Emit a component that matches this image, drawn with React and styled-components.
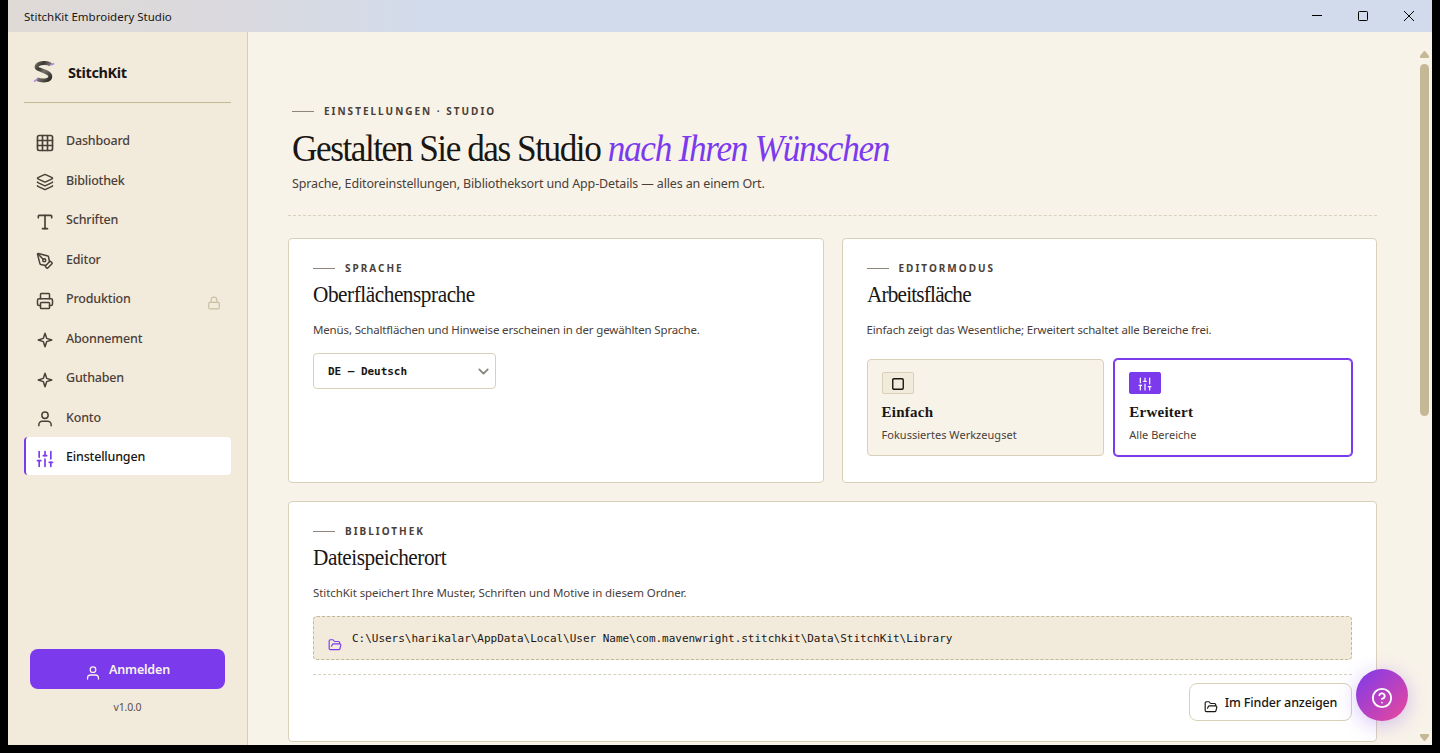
import React from "react";
import styled, { createGlobalStyle } from "styled-components";
import {
  Grid3x3,
  Layers,
  Type,
  PenTool,
  Printer,
  SlidersVertical,
  Lock,
  FolderOpen,
  ChevronDown,
  Square,
  CircleQuestionMark,
} from "lucide-react";

const UserIcon = ({ size = 19, strokeWidth = 1.8 }) => (
  <svg
    width={size}
    height={size}
    viewBox="0 0 24 24"
    fill="none"
    stroke="currentColor"
    strokeWidth={strokeWidth}
    strokeLinecap="round"
  >
    <circle cx="12" cy="7" r="4.2" />
    <path d="M3.8 21v-1.5a4.5 4.5 0 0 1 4.5-4.5h7.4a4.5 4.5 0 0 1 4.5 4.5V21" />
  </svg>
);

const StarIcon = ({ size = 19, strokeWidth = 1.8 }) => (
  <svg
    width={size}
    height={size}
    viewBox="0 0 24 24"
    fill="none"
    stroke="currentColor"
    strokeWidth={strokeWidth}
    strokeLinejoin="round"
  >
    <path d="M12 3l2.2 6.8L21 12l-6.8 2.2L12 21l-2.2-6.8L3 12l6.8-2.2z" />
  </svg>
);

const Logo = () => (
  <svg width="22" height="24" viewBox="0 0 22 24" fill="none">
    <defs>
      <linearGradient id="thread" x1="0" y1="0" x2="1" y2="1">
        <stop offset="0" stopColor="#6b675e" />
        <stop offset="0.25" stopColor="#3b3832" />
        <stop offset="0.5" stopColor="#77736a" />
        <stop offset="1" stopColor="#2b2824" />
      </linearGradient>
    </defs>
    <path
      d="M17.6 5C15.5 2.2 4.8 2 3.6 6.6C2.8 10.5 17.6 10.8 17.3 16.6C17 21.2 9 21.2 4 19.2"
      stroke="url(#thread)"
      strokeWidth="3.9"
    />
    <path d="M17.6 5L21.2 3.4M1 21.6L4.2 19" stroke="#a988ee" strokeWidth="1.6" />
  </svg>
);

const navItems = [
  { label: "Dashboard", icon: Grid3x3, size: 20 },
  { label: "Bibliothek", icon: Layers, size: 18 },
  { label: "Schriften", icon: Type, size: 20 },
  { label: "Editor", icon: PenTool, size: 18 },
  { label: "Produktion", icon: Printer, size: 18 },
  { label: "Abonnement", icon: StarIcon, size: 18 },
  { label: "Guthaben", icon: StarIcon, size: 18 },
  { label: "Konto", icon: UserIcon, size: 18 },
  { label: "Einstellungen", icon: SlidersVertical, size: 20 },
];

const locked = "Produktion";
const current = "Einstellungen";

const App = () => {
  return (
    <>
      <GlobalStyle />
      <Window>
        <TitleBar>
          <span>StitchKit Embroidery Studio</span>
          <WindowControls>
            <WindowButton aria-label="Minimieren">
              <svg width="10" height="10" viewBox="0 0 10 10">
                <path d="M0 4.5h10" stroke="#000" />
              </svg>
            </WindowButton>
            <WindowButton aria-label="Maximieren">
              <svg width="10" height="10" viewBox="0 0 10 10">
                <rect x="0.5" y="0.5" width="9" height="9" rx="0.8" fill="none" stroke="#000" />
              </svg>
            </WindowButton>
            <WindowButton aria-label="Schließen">
              <svg width="10" height="10" viewBox="0 0 10 10">
                <path d="M0 0l10 10M10 0L0 10" stroke="#000" />
              </svg>
            </WindowButton>
          </WindowControls>
        </TitleBar>

        <Body>
          <Sidebar>
            <Brand>
              <Logo />
              <span>StitchKit</span>
            </Brand>
            <Nav>
              {navItems.map(({ label, icon: Icon, size }) => (
                <NavItem key={label} $active={label === current}>
                  <NavIcon>
                    <Icon size={size} strokeWidth={2} />
                  </NavIcon>
                  <NavLabel>{label}</NavLabel>
                  {label === locked && (
                    <LockMark>
                      <Lock size={14} strokeWidth={2} />
                    </LockMark>
                  )}
                </NavItem>
              ))}
            </Nav>
            <SidebarFooter>
              <LoginButton>
                <UserIcon size={16} strokeWidth={1.9} />
                <span>Anmelden</span>
              </LoginButton>
              <Version>v1.0.0</Version>
            </SidebarFooter>
          </Sidebar>

          <Main>
            <PageHeader>
              <Eyebrow>Einstellungen · Studio</Eyebrow>
              <PageTitle>
                Gestalten Sie das Studio <em>nach Ihren Wünschen</em>
              </PageTitle>
              <Lead>
                Sprache, Editoreinstellungen, Bibliotheksort und App-Details — alles an einem Ort.
              </Lead>
            </PageHeader>

            <Cards>
              <Card>
                <Eyebrow>Sprache</Eyebrow>
                <CardTitle>Oberflächensprache</CardTitle>
                <CardText>
                  Menüs, Schaltflächen und Hinweise erscheinen in der gewählten Sprache.
                </CardText>
                <Select>
                  DE — Deutsch
                  <ChevronDown size={17} strokeWidth={2.4} />
                </Select>
              </Card>

              <Card>
                <Eyebrow>Editormodus</Eyebrow>
                <CardTitle $track="-0.9px">Arbeitsfläche</CardTitle>
                <CardText>
                  Einfach zeigt das Wesentliche; Erweitert schaltet alle Bereiche frei.
                </CardText>
                <Modes>
                  <Mode>
                    <ModeChip>
                      <Square size={14} strokeWidth={2.4} />
                    </ModeChip>
                    <ModeName>Einfach</ModeName>
                    <ModeHint>Fokussiertes Werkzeugset</ModeHint>
                  </Mode>
                  <Mode $active>
                    <ModeChip $active>
                      <SlidersVertical size={16} strokeWidth={1.8} />
                    </ModeChip>
                    <ModeName>Erweitert</ModeName>
                    <ModeHint>Alle Bereiche</ModeHint>
                  </Mode>
                </Modes>
              </Card>

              <Card $wide>
                <Eyebrow>Bibliothek</Eyebrow>
                <CardTitle>Dateispeicherort</CardTitle>
                <CardText $track="-0.08px">
                  StitchKit speichert Ihre Muster, Schriften und Motive in diesem Ordner.
                </CardText>
                <PathBox>
                  <FolderOpen size={14} strokeWidth={2} />
                  <code>
                    C:\Users\harikalar\AppData\Local\User Name\com.mavenwright.stitchkit\Data\StitchKit\Library
                  </code>
                </PathBox>
                <CardActions>
                  <FinderButton>
                    <FolderOpen size={14} strokeWidth={2} />
                    <span>Im Finder anzeigen</span>
                  </FinderButton>
                </CardActions>
              </Card>
            </Cards>
          </Main>

          <Scrollbar>
            <ScrollArrow viewBox="0 0 9 7">
              <path d="M4.5 0Q5.2 0 5.7 0.8L9 5V6Q9 7 8 7H1Q0 7 0 6V5L3.3 0.8Q3.8 0 4.5 0Z" />
            </ScrollArrow>
            <Thumb />
            <ScrollArrow viewBox="0 0 9 7" $end>
              <path d="M4.5 7Q5.2 7 5.7 6.2L9 2V1Q9 0 8 0H1Q0 0 0 1V2L3.3 6.2Q3.8 7 4.5 7Z" />
            </ScrollArrow>
          </Scrollbar>
        </Body>

        <HelpButton aria-label="Hilfe">
          <CircleQuestionMark size={22} strokeWidth={2} />
        </HelpButton>
      </Window>
    </>
  );
};

const GlobalStyle = createGlobalStyle`
  *{
    box-sizing: border-box;
    margin: 0;
    padding: 0;
  }
  body{
    background: #000;
    overflow: hidden;
    font-family: "Noto Sans", sans-serif;
    color: #1a1613;
  }
  button{
    font: inherit;
    color: inherit;
    border: none;
    background: none;
  }
  svg{
    flex-shrink: 0;
  }
`;

const Window = styled.div`
  position: relative;
  display: flex;
  flex-direction: column;
  width: 1424px;
  height: 745px;
  margin: 0 8px;
  overflow: hidden;
`;

const TitleBar = styled.header`
  display: flex;
  align-items: center;
  justify-content: space-between;
  height: 32px;
  padding-left: 16px;
  font-size: 11.5px;
  line-height: 16px;
  background: linear-gradient(90deg, #dfdad6 0, #dbd9dd 200px, #d2dbeb 420px);
  span{
    margin-top: 1px;
  }
`;

const WindowControls = styled.div`
  display: flex;
`;

const WindowButton = styled.button`
  display: flex;
  align-items: center;
  justify-content: center;
  width: 46px;
  height: 32px;
`;

const Body = styled.div`
  display: flex;
  flex: 1;
  min-height: 0;
  background: #f8f3e9;
`;

const Sidebar = styled.aside`
  display: flex;
  flex-direction: column;
  width: 240px;
  padding: 0 16px;
  background: #f2eadb;
  border-right: 1px solid #d9ccb8;
`;

const Brand = styled.div`
  display: flex;
  align-items: center;
  gap: 13px;
  height: 71px;
  padding: 28px 0 18px 9px;
  border-bottom: 1px solid #c4b896;
  span{
    font-size: 14.5px;
    font-weight: 700;
    letter-spacing: -0.38px;
    line-height: 20px;
  }
`;

const Nav = styled.nav`
  display: flex;
  flex-direction: column;
  gap: 1.5px;
  margin-top: 18px;
`;

const NavItem = styled.a`
  display: flex;
  align-items: center;
  gap: 11px;
  height: 38px;
  padding: 0 9px;
  border-left: 2px solid ${(p) => (p.$active ? "#7c3aed" : "transparent")};
  border-radius: 4px;
  background: ${(p) => (p.$active ? "#fff" : "transparent")};
  color: ${(p) => (p.$active ? "#1a1613" : "#4a4038")};
  svg{
    color: ${(p) => (p.$active ? "#7c3aed" : "inherit")};
  }
`;

const NavIcon = styled.span`
  display: flex;
  align-items: center;
  justify-content: center;
  width: 20px;
  height: 20px;
  margin-top: 5px;
`;

const NavLabel = styled.span`
  margin-top: 2px;
  font-size: 12.5px;
  font-weight: 500;
  letter-spacing: -0.18px;
  line-height: 18px;
`;

const LockMark = styled.span`
  display: flex;
  margin: 10px 1px 0 auto;
  color: #cbbfa3;
`;

const SidebarFooter = styled.div`
  display: flex;
  flex-direction: column;
  margin: auto 6px 30px;
`;

const LoginButton = styled.button`
  display: flex;
  align-items: center;
  justify-content: center;
  gap: 8px;
  height: 40px;
  border-radius: 8px;
  background: #7c3aed;
  color: #f8f3e9;
  font-size: 12.5px;
  font-weight: 600;
  letter-spacing: -0.18px;
  svg{
    margin-top: 7px;
  }
`;

const Version = styled.div`
  margin-top: 10px;
  text-align: center;
  font-size: 10.5px;
  line-height: 16px;
  letter-spacing: -0.2px;
  color: #5a5048;
`;

const Main = styled.main`
  flex: 1;
  padding: 72px 39px 0 40px;
  overflow: hidden;
`;

const PageHeader = styled.section`
  height: 112px;
  padding-left: 4px;
  border-bottom: 1px dashed #d9d0bd;
`;

const Eyebrow = styled.div`
  display: flex;
  align-items: center;
  gap: 10px;
  font-size: 10px;
  font-weight: 700;
  line-height: 14px;
  letter-spacing: 2px;
  text-transform: uppercase;
  color: #4a4038;
  &::before{
    content: "";
    width: 22px;
    height: 1px;
    background: #8f867b;
  }
`;

const PageTitle = styled.h1`
  width: max-content;
  margin-top: 8px;
  font-family: "Liberation Serif", serif;
  font-size: 38.5px;
  font-weight: 400;
  line-height: 44px;
  letter-spacing: -1.6px;
  transform: scaleX(0.915);
  transform-origin: left;
  em{
    color: #7c3aed;
    letter-spacing: -1.4px;
  }
`;

const Lead = styled.p`
  margin-top: 4px;
  font-size: 12.5px;
  line-height: 20px;
  letter-spacing: -0.14px;
  color: #4a4038;
`;

const Cards = styled.div`
  display: grid;
  grid-template-columns: 1fr 1fr;
  grid-template-rows: 245px 241px;
  gap: 18px;
  margin-top: 22px;
`;

const Card = styled.section`
  grid-column: ${(p) => (p.$wide ? "1 / -1" : "auto")};
  padding: 22px 24px 0;
  border: 1px solid #d9d0b9;
  border-radius: 4px;
  background: #fff;
`;

const CardTitle = styled.h2`
  width: max-content;
  margin-top: 6px;
  font-family: "Liberation Serif", serif;
  font-size: 23px;
  font-weight: 400;
  line-height: 28px;
  letter-spacing: ${(p) => p.$track || "-0.5px"};
  transform: scaleX(0.925);
  transform-origin: left;
`;

const CardText = styled.p`
  margin-top: 12px;
  font-size: 11.5px;
  line-height: 18px;
  letter-spacing: ${(p) => p.$track || "-0.15px"};
  color: #4a4038;
`;

const Select = styled.button`
  display: flex;
  align-items: center;
  justify-content: space-between;
  width: 183px;
  height: 36px;
  margin-top: 14px;
  padding: 0 3px 0 14px;
  border: 1px solid #d9d0b9;
  border-radius: 4px;
  font-family: "DejaVu Sans Mono", monospace;
  font-size: 11px;
  font-weight: 700;
  letter-spacing: -0.04px;
  svg{
    color: #85817c;
  }
`;

const Modes = styled.div`
  display: grid;
  grid-template-columns: 1fr 1fr;
  gap: 10px;
  margin-top: 20px;
`;

const Mode = styled.div`
  height: 97px;
  padding: 12px 14px 0;
  border: 1px solid ${(p) => (p.$active ? "#7c3aed" : "#d9d0b9")};
  border-radius: 4px;
  background: ${(p) => (p.$active ? "#fff" : "#f8f3e9")};
  box-shadow: ${(p) => (p.$active ? "0 0 0 1px #7c3aed" : "none")};
`;

const ModeChip = styled.div`
  display: flex;
  align-items: center;
  justify-content: center;
  width: 32px;
  height: 22px;
  padding-top: 2px;
  border: 1px solid ${(p) => (p.$active ? "#7c3aed" : "#d9d0b9")};
  border-radius: 2px;
  background: ${(p) => (p.$active ? "#7c3aed" : "#f2eadb")};
  color: ${(p) => (p.$active ? "#fff" : "#1a1613")};
`;

const ModeName = styled.div`
  margin-top: 8px;
  font-family: "Liberation Serif", serif;
  font-size: 15px;
  font-weight: 700;
  line-height: 20px;
  letter-spacing: 0.25px;
`;

const ModeHint = styled.div`
  margin-top: 4px;
  font-size: 11px;
  line-height: 18px;
  letter-spacing: 0.03px;
  color: #4a4038;
`;

const PathBox = styled.div`
  display: flex;
  align-items: center;
  gap: 10px;
  height: 44px;
  margin-top: 14px;
  padding: 0 14px;
  border: 1px dashed #c4b896;
  border-radius: 4px;
  background: #f2eadb;
  svg{
    margin-top: 13px;
    color: #7c3aed;
  }
  code{
    font-family: "DejaVu Sans Mono", monospace;
    font-size: 11px;
    letter-spacing: -0.025px;
    white-space: nowrap;
  }
`;

const CardActions = styled.div`
  display: flex;
  justify-content: flex-end;
  margin-top: 14px;
  padding-top: 8px;
  border-top: 1px dashed #d9d0b9;
`;

const FinderButton = styled.button`
  display: flex;
  align-items: center;
  justify-content: center;
  gap: 7px;
  width: 163px;
  height: 38px;
  border: 1px solid #d9d0b9;
  border-radius: 8px;
  background: #fff;
  font-size: 12.5px;
  font-weight: 500;
  letter-spacing: -0.14px;
  svg{
    margin-top: 9px;
  }
`;

const Scrollbar = styled.div`
  display: flex;
  flex-direction: column;
  align-items: center;
  width: 16px;
  padding: 19px 0 4px 1px;
`;

const ScrollArrow = styled.svg`
  width: 9px;
  height: 7px;
  margin-top: ${(p) => (p.$end ? "auto" : "0")};
  fill: #c4b896;
`;

const Thumb = styled.div`
  width: 9px;
  height: 352px;
  margin-top: 6px;
  border-radius: 5px;
  background: #c4b896;
`;

const HelpButton = styled.button`
  position: absolute;
  right: 24px;
  bottom: 24px;
  display: flex;
  align-items: center;
  justify-content: center;
  width: 52px;
  height: 52px;
  padding-top: 6px;
  border-radius: 50%;
  background: linear-gradient(135deg, #7c3aed, #ec4899);
  box-shadow: 0 4px 20px rgba(124, 58, 237, 0.3);
  color: #fff;
`;

export default App;
